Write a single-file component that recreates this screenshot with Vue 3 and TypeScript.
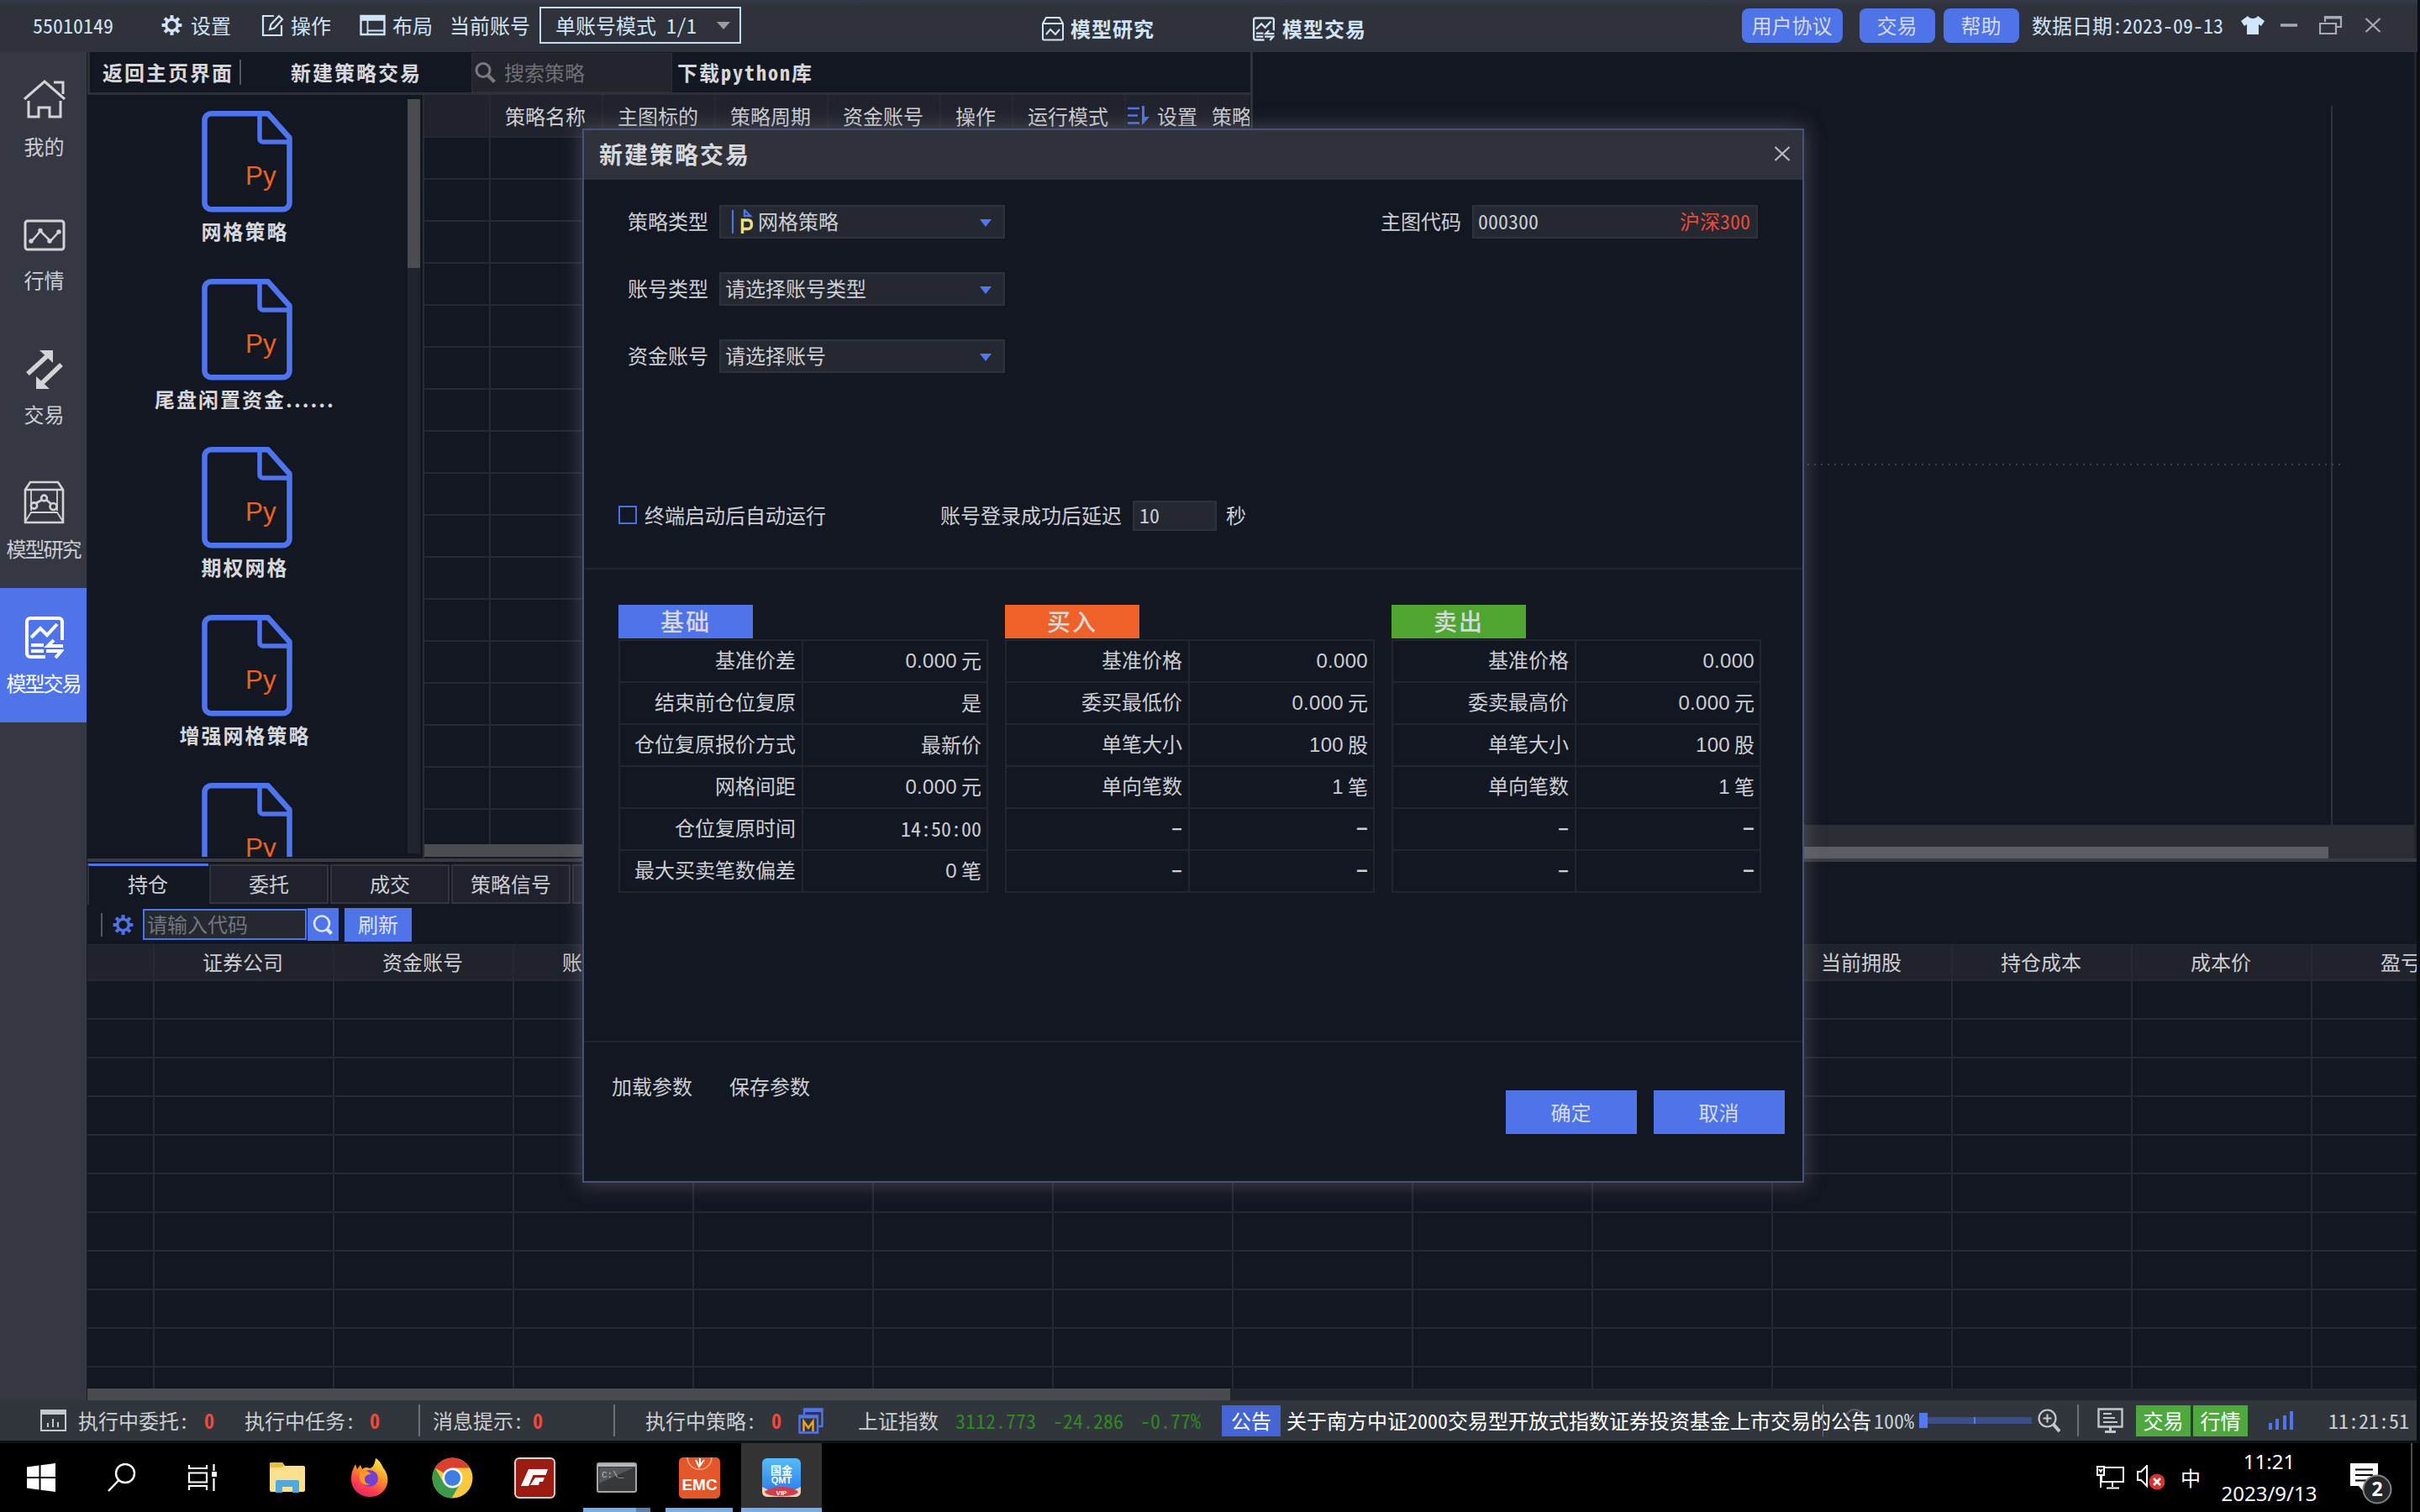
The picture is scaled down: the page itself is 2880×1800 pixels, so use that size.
<script setup lang="ts">
import { h, type FunctionalComponent } from 'vue'

interface Column { label: string; width: number }
interface ParamRow { label: string; value: string; unit?: string; mono?: boolean }
interface ParamGroup { title: string; tone: string; rows: ParamRow[] }

const strategies: string[] = ['网格策略', '尾盘闲置资金......', '期权网格', '增强网格策略', '']

const strategyColumns: Column[] = [
  { label: '', width: 79 },
  { label: '策略名称', width: 134 },
  { label: '主图标的', width: 134 },
  { label: '策略周期', width: 134 },
  { label: '资金账号', width: 134 },
  { label: '操作', width: 86 },
  { label: '运行模式', width: 134 },
  { label: '设置', width: 86 },
  { label: '策略', width: 63 },
]

const positionColumns: Column[] = [
  { label: '', width: 80 },
  ...['证券公司', '资金账号', '账号类型', '', '', '', '', '', '', '当前拥股', '持仓成本', '成本价', '盈亏'].map(
    (label) => ({ label, width: 214 }),
  ),
]

const tabs: string[] = ['持仓', '委托', '成交', '策略信号', '']

const groups: ParamGroup[] = [
  {
    title: '基础',
    tone: 'base',
    rows: [
      { label: '基准价差', value: '0.000', unit: '元' },
      { label: '结束前仓位复原', value: '', unit: '是' },
      { label: '仓位复原报价方式', value: '', unit: '最新价' },
      { label: '网格间距', value: '0.000', unit: '元' },
      { label: '仓位复原时间', value: '14:50:00', mono: true },
      { label: '最大买卖笔数偏差', value: '0', unit: '笔' },
    ],
  },
  {
    title: '买入',
    tone: 'buy',
    rows: [
      { label: '基准价格', value: '0.000' },
      { label: '委买最低价', value: '0.000', unit: '元' },
      { label: '单笔大小', value: '100', unit: '股' },
      { label: '单向笔数', value: '1', unit: '笔' },
      { label: '–', value: '–' },
      { label: '–', value: '–' },
    ],
  },
  {
    title: '卖出',
    tone: 'sell',
    rows: [
      { label: '基准价格', value: '0.000' },
      { label: '委卖最高价', value: '0.000', unit: '元' },
      { label: '单笔大小', value: '100', unit: '股' },
      { label: '单向笔数', value: '1', unit: '笔' },
      { label: '–', value: '–' },
      { label: '–', value: '–' },
    ],
  },
]

const GearIcon: FunctionalComponent = () =>
  h('svg', { width: 25, height: 26, viewBox: '-13 -13 26 26', fill: 'none', stroke: 'currentColor' }, [
    h('circle', { r: 7, 'stroke-width': 3.4 }),
    ...[0, 45, 90, 135, 180, 225, 270, 315].map((a) =>
      h('path', { d: 'M0-7.5V-12.4', 'stroke-width': 4.2, transform: `rotate(${a})` }),
    ),
  ])

const ModelTradeIcon: FunctionalComponent = () =>
  h('svg', { viewBox: '0 0 46 50', fill: 'none', stroke: 'currentColor', 'stroke-width': 4 }, [
    h('path', { d: 'M24 48H6a4 4 0 0 1-4-4V6a4 4 0 0 1 4-4h34a4 4 0 0 1 4 4v22' }),
    h('path', { d: 'M7 25 18 14l8 8L38 9' }),
    h('path', { d: 'M7 34h15M7 41h15M45 35H27l7-7M25 41h18l-7 8' }),
  ])
</script>

<template>
  <div class="screen">
    <header class="titlebar">
      <span class="uid">55010149</span>
      <span class="menu gear"><GearIcon />设置</span>
      <span class="menu edit">
        <svg width="27" height="27" viewBox="0 0 27 27" fill="none" stroke="currentColor" stroke-width="2.2"><path d="M15 2H2v23h22V13" /><path d="M10 18l1.5-6L21 2l4 4-9.500 10.500z" /></svg>操作</span>
      <span class="menu layout">
        <svg width="31" height="26" viewBox="0 0 31 26" fill="none" stroke="currentColor" stroke-width="2.4"><path d="M1.500 2h28v22h-28z" /><path d="M1 4h29M1 6.500h29" /><path d="M9.500 7v17M9.500 19.500h20" stroke-width="1.800" /></svg>布局</span>
      <span class="account">当前账号</span>
      <div class="mode"><span>单账号模式 1/1</span><i class="tri grey"></i></div>
      <span class="center research">
        <svg width="28" height="30" viewBox="0 0 28 30" fill="none" stroke="currentColor" stroke-width="2"><path d="M2 9 6 2h16l4 7v18a1.500 1.500 0 0 1-1.500 1.500h-21A1.500 1.500 0 0 1 2 27zM2 9h24" /><path d="M6 22l5-6 6 6 5-6" /></svg>模型研究</span>
      <span class="center trading"><ModelTradeIcon class="mini" />模型交易</span>
      <button class="pill agree">用户协议</button>
      <button class="pill trade">交易</button>
      <button class="pill help">帮助</button>
      <span class="date">数据日期:2023-09-13</span>
      <svg class="shirt" width="28" height="24" viewBox="0 0 28 24" fill="#cfe6fb"><path d="M8 1c2 4 10 4 12 0l8 6-4 6-3-2v12H7V11l-3 2-4-6z" /></svg>
      <svg class="min" width="20" height="24" viewBox="0 0 20 24" stroke="#a7abb3" stroke-width="3.500"><path d="M0 12h20" /></svg>
      <svg class="restore" width="28" height="24" viewBox="0 0 28 24" fill="none" stroke="#a7abb3" stroke-width="2.200"><path d="M1 10h19v12H1zM7 8V2h19v12h-5" /><path d="M7 3h19" stroke-width="3" /></svg>
      <svg class="close" width="20" height="18" viewBox="0 0 20 18" stroke="#a7abb3" stroke-width="2.200"><path d="M1.500 1l17 16M18.500 1l-17 16" /></svg>
    </header>

    <div class="main">
      <aside class="nav">
        <div class="nav-item">
          <svg width="50" height="46" viewBox="0 0 50 46" fill="none" stroke="currentColor" stroke-width="3"><path d="M1 23 25 2l24 21M36 3h11v14" /><path d="M6 25v19h12V33h13v11h13V25" /></svg>
          <span>我的</span>
        </div>
        <div class="nav-item">
          <svg width="50" height="38" viewBox="0 0 50 38" fill="none" stroke="currentColor" stroke-width="3"><rect x="2" y="2" width="46" height="34" rx="3" /><path d="M9 27l11-13 12 12 10-11" stroke-width="2.500" /><g fill="currentColor" stroke="none"><circle cx="9" cy="26" r="2.700" /><circle cx="20" cy="13.500" r="2.700" /><circle cx="31" cy="26" r="2.700" /><circle cx="42" cy="15" r="2.700" /></g></svg>
          <span>行情</span>
        </div>
        <div class="nav-item">
          <svg width="44" height="48" viewBox="0 0 44 48" fill="none" stroke="currentColor" stroke-width="5.500"><path d="M2 29 26 7M42 18 18 41" /><path d="M16 1h16v15zM28 47H12V32z" fill="currentColor" stroke="none" /></svg>
          <span>交易</span>
        </div>
        <div class="nav-item">
          <svg width="49" height="52" viewBox="0 0 49 52" fill="none" stroke="currentColor" stroke-width="2.600"><path d="M2 11 8 2h33l6 9v39H2zM2 11h45" /><path d="M9 12v24M40 12v24M2 49l7-11h31l7 11" stroke-width="1.800" /><circle cx="12.500" cy="30" r="3.600" /><circle cx="24.500" cy="21" r="3.400" /><circle cx="35.500" cy="31" r="4" /><path d="M15 27l7-4M27 23l6 5" /></svg>
          <span class="tight">模型研究</span>
        </div>
        <div class="nav-item active">
          <ModelTradeIcon class="big" />
          <span class="tight">模型交易</span>
        </div>
      </aside>

      <div class="work">
        <div class="upper">
          <section class="strategy">
            <div class="toolbar">
              <b class="back">返回主页界面</b>
              <b class="create">新建策略交易</b>
              <div class="search">
                <svg width="25" height="25" viewBox="0 0 25 25" fill="none" stroke="#777a80" stroke-width="3"><circle cx="10" cy="9.500" r="8" /><path d="M15.500 15.500l8 8" stroke-width="4" /></svg>搜索策略
              </div>
              <b class="download">下载python库</b>
            </div>
            <div class="strategy-body">
              <div class="files">
                <div v-for="(name, i) in strategies" :key="i" class="file">
                  <svg width="108" height="121" viewBox="0 0 108 121" fill="none" stroke="#4f74f0" stroke-width="6.500">
                    <path d="M79 3.300H12a8 8 0 0 0-8.500 8v98a8 8 0 0 0 8.500 8h84a8 8 0 0 0 8.500-8V32z" stroke-linejoin="round" />
                    <path d="M69 4v29a4 4 0 0 0 4 4h32" stroke-width="5.500" />
                    <text x="52" y="88" font-size="31.500" font-family="Liberation Sans, sans-serif" fill="#ee5f22" stroke="none">Py</text>
                  </svg>
                  <b>{{ name }}</b>
                </div>
              </div>
              <div class="vscroll"><i></i></div>
              <div class="grid strategies">
                <div class="row head">
                  <div v-for="(c, i) in strategyColumns" :key="i" class="cell" :class="{ last: c.label === '策略', sorted: c.label === '设置' }" :style="{ width: c.width + 'px' }">
                    <svg v-if="c.label === '设置'" width="26" height="24" viewBox="0 0 26 24" fill="none" stroke="#4f74e9" stroke-width="2.400"><path d="M0 3h14M0 11.500h12M0 20.500h14M18.500 0v21" /><path d="M17 23V0h3v13h6z" fill="#4f74e9" stroke="none" /></svg>{{ c.label }}
                  </div>
                </div>
                <div v-for="r in 17" :key="r" class="row">
                  <div v-for="(c, i) in strategyColumns" :key="i" class="cell" :style="{ width: c.width + 'px' }"></div>
                </div>
                <div class="hbar"></div>
              </div>
            </div>
          </section>
          <section class="chart">
            <div class="plot"><div class="axis"></div><div class="dots"></div></div>
            <div class="chart-scroll"><i></i></div>
          </section>
        </div>

        <section class="lower">
          <div class="tabs">
            <div v-for="(t, i) in tabs" :key="i" class="tab" :class="{ on: i === 0 }">{{ t }}</div>
          </div>
          <div class="filter">
            <i class="bar"></i>
            <GearIcon class="blue" />
            <div class="code">请输入代码</div>
            <div class="go"><svg width="24" height="24" viewBox="0 0 24 24" fill="none" stroke="#dfe6f5" stroke-width="2.600"><circle cx="11" cy="10.500" r="9" /><path d="M16.500 16.500l6 6" stroke-width="4" /></svg></div>
            <div class="refresh">刷新</div>
          </div>
          <div class="grid positions">
            <div class="row head">
              <div v-for="(c, i) in positionColumns" :key="i" class="cell" :style="{ width: c.width + 'px' }">{{ c.label }}</div>
            </div>
            <div v-for="r in 11" :key="r" class="row">
              <div v-for="(c, i) in positionColumns" :key="i" class="cell" :style="{ width: c.width + 'px' }"></div>
            </div>
          </div>
          <div class="hscroll"><i></i></div>
        </section>
      </div>
    </div>

    <footer class="status">
      <svg class="s-chart" width="31" height="26" viewBox="0 0 31 26" fill="none" stroke="#c3c7ce" stroke-width="2"><path d="M1 1h29v24H1z" /><path d="M1 3.500h29" stroke-width="5" /><path d="M9 21v-5M15 21V11M21 21v-6" /></svg>
      <span class="s-a">执行中委托:</span><b class="s-a0">0</b>
      <span class="s-b">执行中任务:</span><b class="s-b0">0</b>
      <i class="rule s-r1"></i>
      <span class="s-c">消息提示:</span><b class="s-c0">0</b>
      <i class="rule s-r2"></i>
      <span class="s-d">执行中策略:</span><b class="s-d0">0</b>
      <svg class="s-m" width="30" height="31" viewBox="0 0 30 31" fill="none" stroke="#4f74e9" stroke-width="2.400"><path d="M7 8V1.500h21.500V22H24" /><path d="M7 3.500h21" stroke-width="3" /><path d="M1.500 9.500h21.500v20H1.500z" /><path d="M1 11h22" stroke-width="3" /><path d="M6.500 28V16l5.500 8 5.500-8v12" stroke="#f0a422" /></svg>
      <span class="s-idx">上证指数</span>
      <span class="fall">3112.773</span><span class="fall">-24.286</span><span class="fall">-0.77%</span>
      <span class="notice">公告</span>
      <div class="news">
        关于南方中证2000交易型开放式指数证券投资基金上市交易的公告
        <i class="ghost-rule"></i>
        <svg class="ghost-lens" width="28" height="30" viewBox="0 0 28 30" fill="none" stroke="#7f86a0" stroke-width="2"><circle cx="12" cy="12" r="10" /><path d="M19 20l7 8" /></svg>
      </div>
      <span class="pct">100%</span>
      <div class="slider"><i class="knob"></i><i class="track"><i class="tick"></i></i></div>
      <svg class="s-zoom" width="27" height="28" viewBox="0 0 27 28" fill="none" stroke="#c3c7ce" stroke-width="2.200"><circle cx="11.500" cy="11.500" r="10" /><path d="M11.500 6.500v10M6.500 11.500h10" /><path d="M19 19l7 8" stroke-width="4" /></svg>
      <i class="rule s-r3"></i>
      <svg class="s-mon" width="31" height="30" viewBox="0 0 31 30" fill="none" stroke="#c3c7ce" stroke-width="2.400"><path d="M1.500 1.500h28v21h-28z" /><path d="M7 7h10M7 12h14M7 17h17" stroke-width="2" /><path d="M15.500 22v6M9 28.500h13" stroke-width="3" /></svg>
      <span class="green first">交易</span><span class="green">行情</span>
      <svg class="s-bars" width="29" height="22" viewBox="0 0 29 22" fill="#4f74f0"><path d="M0 14h4v8H0zM8 9h4v13H8zM17 5h4v17h-4zM25 0h4v22h-4z" /></svg>
      <span class="clock">11:21:51</span>
    </footer>

    <footer class="taskbar">
      <div class="task"><svg width="34" height="34" viewBox="0 0 34 34" fill="#fff"><path d="M0 4.500 14.500 2.500V16H0zM16.500 2.200 34 0v16H16.500zM0 18h14.500v13.500L0 29.500zM16.500 18H34v16l-17.500-2.200z" /></svg></div>
      <div class="task"><svg width="34" height="34" viewBox="0 0 34 34" fill="none" stroke="#fff" stroke-width="2.400"><circle cx="21" cy="12" r="11" /><path d="M13.500 20 1 33" /></svg></div>
      <div class="task"><svg width="34" height="34" viewBox="0 0 34 34" fill="none" stroke="#fff" stroke-width="2.200"><path d="M1 2v4h21V2M1 32v-5h21v5M1 11.500h21v11H1zM30.500 1v8M30.500 18v15" /><path d="M28 10h6v6h-6z" fill="#fff" stroke="none" /></svg></div>
      <div class="task folder"><svg width="44" height="38" viewBox="0 0 44 38"><path d="M1 3a2 2 0 0 1 2-2h13l3 4h22a2 2 0 0 1 2 2v27a2 2 0 0 1-2 2H3a2 2 0 0 1-2-2z" fill="#fbe08d" /><path d="M1 3a2 2 0 0 1 2-2h13l2 3-2 3H1z" fill="#eebb3a" /><path d="M8 37V24a2 2 0 0 1 2-2h24a2 2 0 0 1 2 2v13h-8v-7H16v7z" fill="#4fa9dc" /></svg></div>
      <div class="task"><svg width="46" height="48" viewBox="0 0 46 48"><defs><linearGradient id="fx" x1=".8" y1="0" x2=".3" y2="1"><stop offset="0" stop-color="#fff04f" /><stop offset=".4" stop-color="#ff9a26" /><stop offset=".75" stop-color="#ff3f4c" /><stop offset="1" stop-color="#e0226a" /></linearGradient></defs><path d="M30 1c7 4 7 9 11 14 9 15-1 32-18 32C10 47 0 37 1 24 1 18 3 14 6 8l2 6 4-5 2 5c4-3 6-2 9-1 5-2 6-6 7-12z" fill="url(#fx)" /><circle cx="23" cy="25" r="10" fill="#7340cf" /><path d="M12 17c5-2 9-1 13 3-5 0-8 2-8 6 0 3 2 6 7 6-9 3-16-4-12-15z" fill="#ff9a26" /></svg></div>
      <div class="task"><svg width="49" height="49" viewBox="0 0 48 48"><circle cx="24" cy="24" r="23.500" fill="#f9c83c" /><path d="M24 24 3.700 12.200A23.500 23.500 0 0 1 44.300 12.300H24z" fill="#d9402f" /><path d="M3.700 12.200A23.500 23.500 0 0 0 23 47.500l10.500-17.800L14 30z" fill="#3c9a4b" /><circle cx="24" cy="24" r="11.800" fill="#fff" /><circle cx="24" cy="24" r="9.300" fill="#3f7de0" /></svg></div>
      <div class="task"><svg width="49" height="49" viewBox="0 0 49 49"><rect x="1" y="1" width="47" height="47" rx="5" fill="#9b1c13" stroke="#e4d3d0" stroke-width="2" /><path d="M17 14h23l-2.500 7H22.500L17 34H8z" fill="#fff" /><path d="M25 24h11l-2 5h-4l-1 4H19z" fill="#fff" /></svg></div>
      <div class="task run two"><svg width="48" height="36" viewBox="0 0 48 36"><rect x="1" y="1" width="46" height="34" rx="2" fill="#36383a" stroke="#a4a6a8" stroke-width="2" /><path d="M2 2h44v3H2z" fill="#b7babd" /><path d="M3 6h42L3 25z" fill="#55585b" /><text x="6" y="18" font-size="11" font-family="Liberation Mono, monospace" fill="#bbb">C:\_</text></svg></div>
      <div class="task run"><svg width="49" height="49" viewBox="0 0 49 49"><rect width="49" height="49" rx="5" fill="#e4572b" /><path d="M10 0c1 19 28 19 29 0" fill="none" stroke="#f3a88e" stroke-width="1.500" /><path d="M20 3l4 8 6-8M25 1v8" stroke="#fff" stroke-width="2" fill="none" /><text x="24.500" y="39" text-anchor="middle" font-size="19" font-weight="700" font-family="Liberation Sans, sans-serif" fill="#fff">EMC</text></svg></div>
      <div class="task run current"><svg width="46" height="47" viewBox="0 0 46 47"><defs><linearGradient id="qm" x1="0" y1="0" x2="0" y2="1"><stop offset="0" stop-color="#55bdf9" /><stop offset="1" stop-color="#2675ee" /></linearGradient></defs><rect width="46" height="46" rx="6" fill="url(#qm)" /><path d="M0 34 8 38h30l8-4v6a6 6 0 0 1-6 6H6a6 6 0 0 1-6-6z" fill="#f3d2ae" /><path d="M3 40c8-8 32-8 40 0-2 7-38 7-40 0z" fill="#cf3e50" /><g fill="#fff" text-anchor="middle" font-weight="700"><text x="23" y="19" font-size="13" font-family="Noto Sans CJK SC, sans-serif">国金</text><text x="23" y="30" font-size="11" font-family="Liberation Sans, sans-serif">QMT</text><text x="23" y="44" font-size="8" font-family="Liberation Sans, sans-serif">VIP</text></g></svg></div>
      <div class="tray">
        <svg class="net" width="33" height="28" viewBox="0 0 33 28" fill="none" stroke="#fff" stroke-width="2"><path d="M9 2h23v17H6v-7M19 19v6M12 26.500h15M1 1h8v10H1zM5 11v15M3 4l2 3 2-3" /></svg>
        <svg class="vol" width="34" height="30" viewBox="0 0 34 30" fill="none" stroke="#fff" stroke-width="2"><path d="M1 8h4l7-7v24l-7-7H1z" /><circle cx="24" cy="20" r="9.500" fill="#d8322e" stroke="none" /><path d="M20 16l8 8M28 16l-8 8" stroke-width="2.600" /></svg>
        <span class="ime">中</span>
        <div class="when"><span>11:21</span><span>2023/9/13</span></div>
        <div class="inbox">
          <svg width="50" height="50" viewBox="0 0 50 50"><path d="M0 0h33v27H17v8l-7-8H0z" fill="#fff" /><path d="M6 7.500h21M6 14h21M6 20.500h15" stroke="#000" stroke-width="2" /><circle cx="32" cy="31" r="16.500" fill="#26272a" stroke="#808285" stroke-width="2" /><text x="32" y="39" text-anchor="middle" font-size="23" font-weight="700" font-family="Noto Sans, sans-serif" fill="#fff">2</text></svg>
        </div>
        <i class="peek"></i>
      </div>
    </footer>

    <div class="dialog">
      <div class="dialog-title"><b>新建策略交易</b><svg width="20" height="18" viewBox="0 0 20 18" stroke="#b9bcc3" stroke-width="2.200"><path d="M1.500 1l17 16M18.500 1l-17 16" /></svg></div>
      <div class="form">
        <div class="form-row">
          <label>策略类型</label>
          <div class="field select pick"><svg width="27" height="30" viewBox="0 0 27 30" fill="none"><path d="M1 1v28" stroke="#4f74e9" stroke-width="2" /><path d="M15 1v7h7z" stroke="#4f74e9" stroke-width="2.400" /><path d="M12.500 29V13H19q4.500 0 4.500 5.200T19 23.500H13" stroke="#e9df7c" stroke-width="3.400" /></svg><span>网格策略</span><i class="tri"></i></div>
          <label class="second">主图代码</label>
          <div class="field"><span>000300</span><span class="index">沪深300</span></div>
        </div>
        <div class="form-row"><label>账号类型</label><div class="field select"><span>请选择账号类型</span><i class="tri"></i></div></div>
        <div class="form-row"><label>资金账号</label><div class="field select"><span>请选择账号</span><i class="tri"></i></div></div>
        <div class="auto">
          <i class="check"></i><span class="auto-text">终端启动后自动运行</span>
          <span class="delay">账号登录成功后延迟</span><div class="secs">10</div><span>秒</span>
        </div>
      </div>
      <div class="params">
        <div v-for="g in groups" :key="g.title" class="group">
          <div class="tag" :class="g.tone">{{ g.title }}</div>
          <div class="ptable">
            <div v-for="(r, i) in g.rows" :key="i" class="prow" :class="{ dash: r.value === '–' }">
              <div class="pkey">{{ r.label }}</div>
              <div class="pval"><span v-if="r.value" :class="{ num: !r.mono }">{{ r.value }}</span><span v-if="r.unit">{{ r.unit }}</span></div>
            </div>
          </div>
        </div>
      </div>
      <div class="dialog-foot">
        <span>加载参数</span><span>保存参数</span>
        <div class="actions"><button>确定</button><button>取消</button></div>
      </div>
    </div>
  </div>
</template>

<style>
body { margin: 0; background: #000; }
</style>

<style scoped>
* { box-sizing: border-box; }
svg { display: block; flex: none; }
i { display: block; font-style: normal; flex: none; }
button { border: 0; padding: 0 1px 1px 0; font: inherit; font-feature-settings: inherit; color: inherit; }
.screen {
  position: relative; width: 2880px; height: 1800px; overflow: hidden; display: flex; flex-direction: column;
  background: #0c0d12; color: #ccced3; font: 24px/30px "Noto Sans CJK SC", sans-serif;
  font-feature-settings: "hwid" 1; font-kerning: none; white-space: nowrap;
}
b { font-weight: 700; letter-spacing: 2px; }

/* title bar */
.titlebar { flex: none; width: 2877px; height: 62px; display: flex; align-items: center; background: linear-gradient(#353847, #2f323a 8px); color: #cfe4f8; padding-bottom: 2px; }
.titlebar > * { flex: none; }
.uid { margin-left: 39px; width: 96px; }
.menu { display: flex; align-items: center; }
.gear { margin-left: 57px; gap: 10px; }
.edit { margin-left: 36px; gap: 8px; }
.layout { margin-left: 34px; gap: 8px; }
.account { margin-left: 20px; }
.mode { margin: 0 0 0 11px; width: 240px; height: 44px; border: 2px solid #c5dcf2; display: flex; align-items: center; padding: 0 11px 0 17px; justify-content: space-between; }
.tri { width: 0; height: 0; border: 7.500px solid transparent; border-top: 9px solid #4f78f2; border-bottom: 0; }
.tri.grey { border-top-color: #9a9c9f; border-left-width: 8px; border-right-width: 8px; }
.center { display: flex; align-items: center; gap: 7px; font-weight: 700; letter-spacing: 1px; padding-top: 8px; }
.research { margin-left: 357px; }
.trading { margin-left: 117px; gap: 9px; }
.mini { width: 26px; height: 29px; }
.pill { height: 41px; border-radius: 8px; background: #4f74e9; color: #d5d9e0; }
.agree { margin-left: 447px; width: 120px; }
.trade { margin-left: 20px; width: 90px; }
.help { margin-left: 10px; width: 90px; }
.date { margin-left: 15px; width: 228px; }
.shirt { margin-left: 21px; }
.min { margin-left: 19px; }
.restore { margin-left: 26px; }
.close { margin-left: 26px; }

.main { flex: none; height: 1605px; display: flex; background: #131722; width: 2876px; }
.nav { flex: none; width: 104px; background: #353843; border-right: 1px solid #1b1d26; padding-left: 2px; }
.nav-item { height: 160px; display: flex; flex-direction: column; align-items: center; }
.nav-item:first-child { height: 158px; }
.nav-item svg { margin-top: 29px; height: 62px; color: #d2d3d5; }
.nav-item:nth-child(4) svg { margin-top: 27px; margin-bottom: 2px; }
.nav-item span { margin-top: 7px; height: 30px; }
.nav-item:first-child svg { margin-top: 25px; }
.nav-item:first-child span { margin-top: 10px; }
.nav-item.active { background: #4f74e9; color: #fff; margin-left: -2px; padding-left: 2px; }
.nav-item.active svg { color: #fff; height: 50px; width: 46px; margin: 34px 0 0; }
.nav-item.active span { margin-top: 14px; }
.nav-item .tight { letter-spacing: -2px; margin-left: -2px; }

.work { flex: none; width: 2772px; display: flex; flex-direction: column; }
.upper { height: 960px; display: flex; }
.strategy { width: 1387px; border-right: 3px solid #303239; display: flex; flex-direction: column; }
.toolbar { height: 51px; border-bottom: 3px solid #2e3036; border-left: 3px solid #2e3036; display: flex; align-items: center; color: #d6d8dc; }
.back { margin-left: 15px; border-right: 2px solid #55585e; height: 30px; width: 165px; }
.create { margin-left: 59px; }
.search { margin-left: 59px; width: 239px; height: 47px; background: #22242e; border: 1px solid #2c2e36; display: flex; align-items: center; gap: 10px; padding-left: 3px; color: #6e7075; }
.download { margin-left: 6px; }
.strategy-body { display: flex; height: 909px; }
.files { width: 381px; height: 907px; overflow: hidden; padding-top: 19px; }
.file { height: 200px; display: flex; flex-direction: column; align-items: center; padding-right: 6px; color: #d6d8dc; }
.file svg { margin-left: 5px; }
.file b { margin-top: 7px; height: 30px; font-feature-settings: normal; }
.vscroll { width: 15px; height: 898px; margin: 5px 0; background: #22242d; }
.vscroll i { height: 201px; background: #4a4c50; }
.grid { position: relative; overflow: hidden; }
.row { display: flex; }
.cell { flex: none; border-right: 2px solid #262933; border-bottom: 2px solid #262933; display: flex; align-items: center; justify-content: center; }
.strategies { width: 984px; margin-left: 3px; border-left: 2px solid #2a2c33; }
.strategies .row { height: 50px; }
.strategies .head { height: 51px; }
.head .cell { background: #20222c; padding-right: 2px; }
.head .cell.sorted { justify-content: flex-start; gap: 9px; padding: 0 0 0 2px; border-right-width: 1px; }
.head .cell.last { justify-content: flex-start; padding: 0 0 0 16px; overflow: hidden; }
.hbar { position: absolute; left: 0; right: 0; bottom: 2px; height: 15px; background: #4b4c50; }

.chart { flex: 1; border-right: 3px solid #24262f; display: flex; flex-direction: column; }
.plot { position: relative; height: 920px; display: flow-root; }
.axis { height: 856px; margin-top: 64px; width: 1285px; border-right: 2px solid #30323b; }
.dots { position: absolute; left: 500px; top: 490px; width: 794px; height: 2px; background: repeating-linear-gradient(90deg, #3f424a 0 2px, transparent 2px 8px); }
.chart-scroll { height: 40px; background: #2a2d33; padding-top: 26px; }
.chart-scroll i { width: 1280px; height: 14px; background: #5a5d64; }

/* lower panel */
.lower { height: 645px; border-top: 4px solid #393b40; display: flex; flex-direction: column; }
.tabs { height: 51px; padding-top: 2px; display: flex; }
.tab { width: 142px; height: 47px; margin: 1px 2px 0 0; background: #1f212c; border: 2px solid #34363c; border-left-color: #303239; display: flex; align-items: center; justify-content: center; padding: 0 0 2px; }
.tab.on { background: #131722; height: 49px; border: 0; border-left: 2px solid #303239; border-top: 3px solid #4f74e9; width: 144px; margin: 0 1px 0 0; padding: 0 2px 4px 0; }
.filter { height: 47px; display: flex; align-items: center; }
.bar { width: 2px; height: 28px; margin-left: 16px; background: #55585e; }
.blue { color: #4f74e9; margin-left: 12px; }
.code { margin-left: 11px; width: 195px; height: 37px; border: 2px solid #4f74e9; background: #252731; color: #74767d; padding-left: 3px; line-height: 31px; }
.go { margin-left: 1px; width: 37px; height: 39px; background: #4f74e9; display: flex; align-items: center; justify-content: center; padding-right: 2px; }
.refresh { margin-left: 7px; width: 80px; height: 40px; background: #4f74e9; text-align: center; line-height: 37px; color: #dfe2e8; }
.positions { height: 529px; }
.positions .row { height: 46px; }
.positions .head { height: 44px; border-top: 1px solid #262933; }
.positions .head .cell { padding-bottom: 1px; }
.hscroll { height: 14px; background: #22242f; }
.hscroll i { width: 1360px; height: 14px; background: #4a4b4f; }

/* status bar */
.status { flex: none; width: 2876px; height: 51px; background: #31353c; border-bottom: 3px solid #10121b; display: flex; align-items: center; }
.status > * { flex: none; }
.status b { color: #ef4a3c; letter-spacing: 0; width: 12px; }
.rule { width: 2px; height: 38px; background: #6c6f75; }
.s-chart { margin-left: 48px; }
.s-a { margin-left: 14px; } .s-a0 { margin-left: 18px; }
.s-b { margin-left: 36px; } .s-b0 { margin-left: 17px; }
.s-r1 { margin-left: 46px; }
.s-c { margin-left: 15px; } .s-c0 { margin-left: 11px; }
.s-r2 { margin-left: 84px; }
.s-d { margin-left: 36px; } .s-d0 { margin-left: 18px; }
.s-m { margin-left: 20px; }
.s-idx { margin-left: 41px; }
.fall { margin-left: 20px; color: #2f8a20; }
.notice { margin-left: 25px; width: 70px; height: 37px; line-height: 35px; background: #4465d3; color: #fff; text-align: center; }
.news { position: relative; margin-left: 7px; width: 696px; color: #fff; }
.ghost-rule { position: absolute; left: 638px; top: -4px; width: 1px; height: 38px; background: #6c6f75; }
.ghost-lens { position: absolute; left: 664px; top: 0; opacity: .5; }
.pct { margin-left: 3px; width: 48px; }
.slider { margin-left: 6px; width: 134px; display: flex; align-items: center; }
.knob { width: 10px; height: 18px; background: #5179f5; }
.track { width: 124px; height: 8px; background: #3c4d8c; }
.tick { margin-left: 55px; width: 2px; height: 8px; background: #5179f5; }
.s-zoom { margin-left: 7px; }
.s-r3 { margin-left: 20px; }
.s-mon { margin-left: 22px; }
.green { margin-left: 3px; width: 65px; height: 37px; line-height: 35px; text-align: center; background: #4fa83d; color: #fff; }
.green.first { margin-left: 15px; }
.s-bars { margin-left: 25px; }
.clock { margin-left: 42px; }

/* taskbar */
.taskbar { flex: none; height: 82px; width: 2880px; background: #000; display: flex; padding-left: 1px; }
.task { width: 96px; height: 82px; display: flex; align-items: center; justify-content: center; }
.task:nth-child(n + 4) { width: 98px; }
.task.folder { margin-left: 4px; }
.task.run { width: 80px; margin: 0 9px; padding-top: 5px; border-bottom: 5px solid #79ade6; }
.task.two { border-image: linear-gradient(90deg, #79ade6 62px, #5a81ab 62px) 1; border-width: 0 0 5px; }
.task.current { width: 96px; margin: 0 0 0 1px; background: #333; }
.tray { margin-left: auto; display: flex; align-items: center; height: 82px; color: #fff; }
.vol { margin-left: 15px; }
.ime { margin-left: 18px; width: 24px; }
.when { margin-left: 22px; width: 119px; display: flex; flex-direction: column; align-items: center; font-family: "Noto Sans", sans-serif; line-height: 38px; }
.inbox { margin-left: 37px; padding-top: 16px; }
.peek { width: 2px; height: 82px; margin: 0 9px 0 22px; background: #4c4c4c; }

/* dialog */
.dialog {
  position: absolute; left: 693px; top: 153px; width: 1454px; height: 1255px; background: #131722;
  border: 2px solid #46527a; box-shadow: 0 0 22px 2px rgba(120, 120, 128, .45); display: flex; flex-direction: column;
}
.dialog-title { height: 59px; background: #2f323a; display: flex; align-items: center; justify-content: space-between; padding: 0 14px 3px 18px; font-size: 28px; color: #d6d8dc; }
.form { height: 464px; padding: 29px 0 0 52px; border-bottom: 2px solid #22242f; }
.form-row { display: flex; align-items: center; height: 41px; margin-bottom: 39px; }
.form-row label { width: 109px; padding-bottom: 2px; }
.field { width: 340px; height: 40px; background: #252731; border: 2px solid #2f3138; display: flex; align-items: center; padding: 0 7px 0 5px; }
.field span { padding-bottom: 2px; }
.field.select { padding: 0 14px 0 5px; justify-content: space-between; }
.pick svg { margin: 0 4px 0 8px; }
.pick span { flex: 1; }
.select .tri { margin-top: 4px; }
.form-row .second { margin-left: 447px; }
.index { margin-left: auto; color: #e84a3c; }
.auto { display: flex; align-items: center; height: 36px; margin: 152px 0 0 -11px; }
.auto span { padding-bottom: 2px; }
.check { width: 22px; height: 22px; border: 2px solid #4a70e6; margin-top: -2px; }
.auto-text { margin-left: 9px; }
.delay { margin-left: 136px; }
.secs { width: 100px; height: 36px; margin: 0 11px 0 13px; padding-left: 6px; line-height: 30px; background: #252731; border: 2px solid #2f3138; }
.params { height: 563px; padding: 42px 0 0 41px; display: flex; gap: 20px; border-bottom: 2px solid #22242f; }
.group { width: 440px; }
.tag { width: 160px; height: 40px; line-height: 38px; text-align: center; font-size: 28px; font-weight: 500; letter-spacing: 2px; color: #d6d8dc; }
.tag.base { background: #4f74e9; }
.tag.buy { background: #ee622a; }
.tag.sell { background: #4fa530; }
.ptable { margin-top: 1px; border: 2px solid #24262f; border-bottom: 0; }
.prow { display: flex; height: 50px; border-bottom: 2px solid #24262f; align-items: center; }
.pkey { width: 218px; height: 48px; line-height: 44px; border-right: 2px solid #24262f; text-align: right; padding-right: 7px; }
.pval { flex: 1; display: flex; align-items: center; justify-content: flex-end; gap: 5px; padding: 0 6px 3px 0; }
.num { font-family: "Liberation Sans", sans-serif; letter-spacing: .3px; padding-top: 2px; }
.dash .pkey { line-height: 42px; font-weight: 700; }
.dash .num { padding: 0 0 2px; font-weight: 700; }
.dialog-foot { flex: 1; display: flex; align-items: flex-start; padding: 37px 21px 0 33px; gap: 44px; }
.actions { margin: 20px 0 0 auto; display: flex; gap: 20px; }
.actions button { width: 156px; height: 52px; background: #4f74e9; color: #d9dce3; }
</style>
